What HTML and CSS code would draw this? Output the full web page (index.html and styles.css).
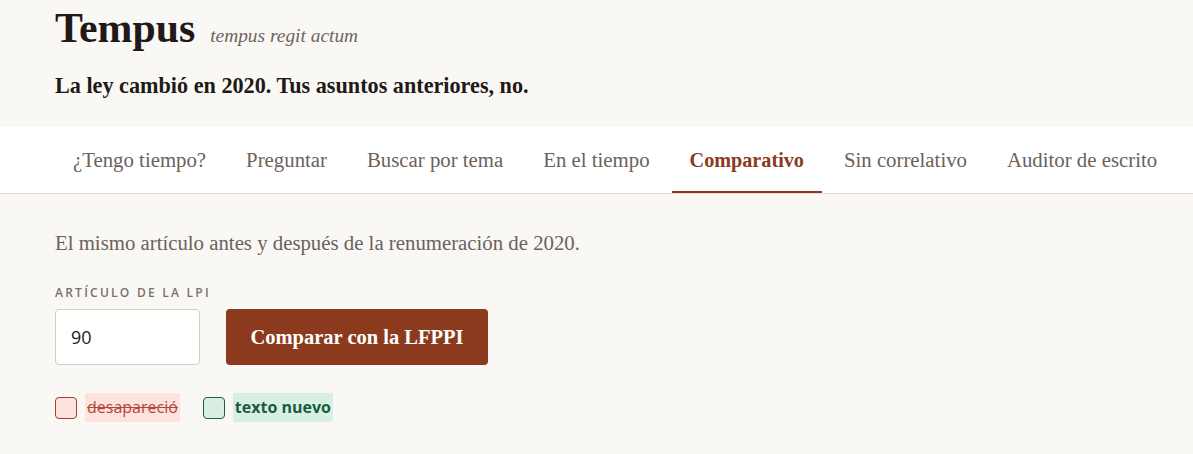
FILE: index.html
```html
<!DOCTYPE html>
<html lang="es">
<head>
<meta charset="utf-8">
<title>Tempus</title>
<link rel="stylesheet" href="styles.css">
</head>
<body>
<header class="masthead">
  <div class="brand">
    <h1 class="logo">Tempus</h1>
    <span class="motto">tempus regit actum</span>
  </div>
  <p class="tagline">La ley cambió en 2020. Tus asuntos anteriores, no.</p>
</header>
<nav class="tabs">
  <a class="tab">¿Tengo tiempo?</a>
  <a class="tab">Preguntar</a>
  <a class="tab">Buscar por tema</a>
  <a class="tab">En el tiempo</a>
  <a class="tab active">Comparativo</a>
  <a class="tab">Sin correlativo</a>
  <a class="tab">Auditor de escrito</a>
</nav>
<main class="panel">
  <p class="intro">El mismo artículo antes y después de la renumeración de 2020.</p>
  <label class="field-label" for="art">Artículo de la LPI</label>
  <div class="form-row">
    <input id="art" class="art-input" type="text" value="90">
    <button class="btn-compare">Comparar con la LFPPI</button>
  </div>
  <div class="legend">
    <span class="legend-item"><span class="swatch swatch-del"></span><span class="chip chip-del">desapareció</span></span>
    <span class="legend-item"><span class="swatch swatch-ins"></span><span class="chip chip-ins">texto nuevo</span></span>
  </div>
</main>
</body>
</html>
```
FILE: styles.css
```css
* { box-sizing: border-box; }
html, body { margin: 0; padding: 0; }
body {
  background: #faf8f5;
  font-family: "Liberation Serif", "Times New Roman", serif;
  color: #1f1a17;
}
.masthead {
  padding: 4px 55px 0;
  height: 127px;
}
.brand {
  display: flex;
  align-items: baseline;
  gap: 15px;
}
.logo {
  margin: 0;
  font-size: 41.8px;
  font-weight: bold;
  line-height: 48px;
  color: #1f1a17;
}
.motto {
  font-style: italic;
  font-size: 19.4px;
  color: #6e655d;
}
.tagline {
  margin: 20px 0 0;
  font-size: 22.2px;
  font-weight: bold;
  line-height: 28px;
}
.tabs {
  display: flex;
  gap: 4px;
  background: #ffffff;
  border-bottom: 1px solid #e5dfd5;
  padding: 0 0 0 55px;
}
.tab {
  display: block;
  height: 66px;
  line-height: 66px;
  padding: 0 18px;
  font-size: 20.8px;
  color: #6b625a;
  border-bottom: 2px solid transparent;
  cursor: pointer;
}
.tab.active {
  color: #8b3a1e;
  font-weight: bold;
  font-size: 20.2px;
  border-bottom-color: #8b3a1e;
}
.panel {
  padding: 36px 55px 0;
}
.intro {
  margin: 0;
  font-size: 20.8px;
  line-height: 26px;
  color: #6b625a;
}
.field-label {
  display: block;
  margin-top: 28px;
  font-family: "Open Sans", "Noto Sans", sans-serif;
  font-size: 12px;
  font-weight: 600;
  letter-spacing: 2.25px;
  text-transform: uppercase;
  color: #7a7068;
  line-height: 18px;
}
.form-row {
  display: flex;
  gap: 26px;
  margin-top: 7px;
}
.art-input {
  width: 145px;
  height: 56px;
  border: 1px solid #d6cbbf;
  border-radius: 4px;
  background: #fff;
  padding: 0 15px;
  font-family: "Open Sans", "Noto Sans", sans-serif;
  font-size: 18px;
  color: #1f1a17;
}
.btn-compare {
  width: 262px;
  height: 56px;
  border: none;
  border-radius: 4px;
  background: #8b3a1e;
  color: #fff;
  font-family: "Liberation Serif", "Times New Roman", serif;
  font-weight: bold;
  font-size: 20.5px;
}
.legend {
  display: flex;
  gap: 23px;
  margin-top: 28px;
  align-items: center;
}
.legend-item {
  display: flex;
  align-items: center;
  gap: 8px;
}
.swatch {
  display: block;
  width: 22px;
  height: 22px;
  border-radius: 4px;
}
.swatch-del { background: #fde2dd; border: 1px solid #b03a2e; }
.swatch-ins { background: #d9efe3; border: 1px solid #1f5e45; }
.chip {
  display: block;
  padding: 2px 2px;
  border-radius: 2px;
  font-family: "Open Sans", "Noto Sans", sans-serif;
  font-size: 16px;
  line-height: 25px;
}
.chip-del {
  background: #fde2dd;
  color: #b0473a;
  text-decoration: line-through;
}
.chip-ins {
  background: #d7f0e3;
  color: #1a5c40;
  font-weight: bold;
}
```
